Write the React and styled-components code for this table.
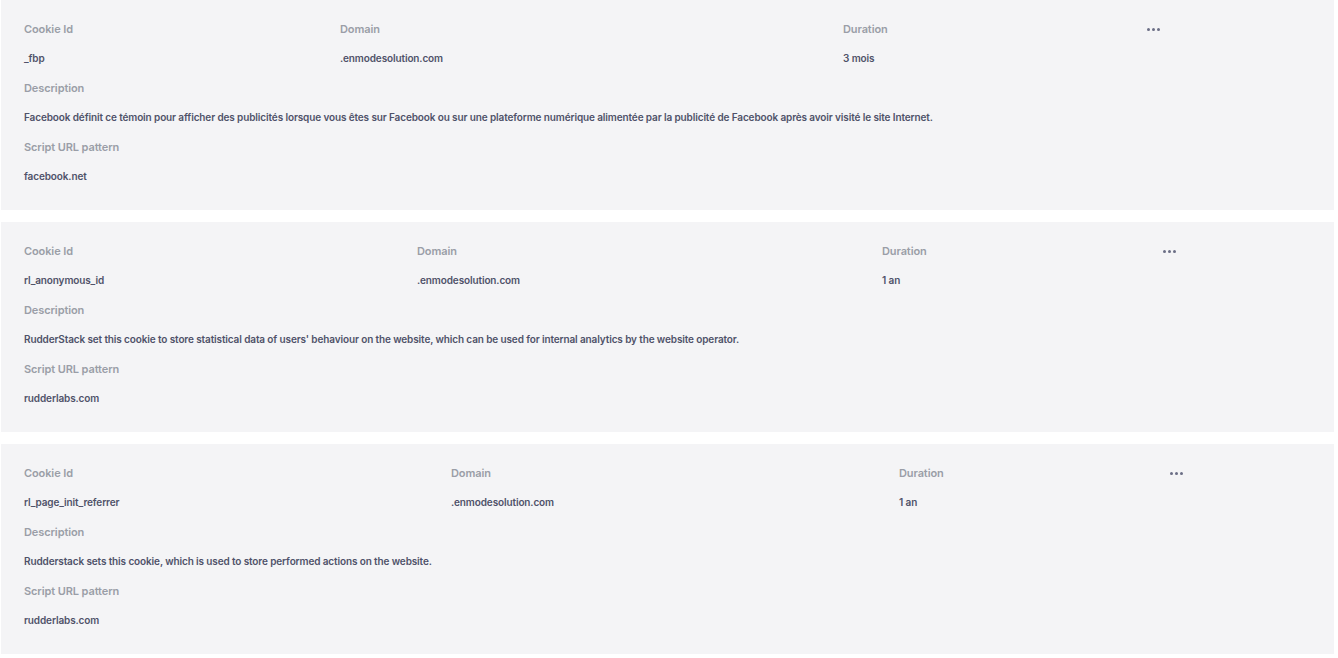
import React from 'react';
import styled, { createGlobalStyle } from 'styled-components';

const GlobalStyle = createGlobalStyle`
	body {
		margin: 0;
		background: #ffffff;
		font-family: Inter, 'Noto Sans', sans-serif;
	}
`;

const cookies = [
	{
		id: '_fbp',
		domain: '.enmodesolution.com',
		duration: '3 mois',
		description:
			'Facebook définit ce témoin pour afficher des publicités lorsque vous êtes sur Facebook ou sur une plateforme numérique alimentée par la publicité de Facebook après avoir visité le site Internet.',
		pattern: 'facebook.net',
		columns: '316px 503px 304px 1fr',
	},
	{
		id: 'rl_anonymous_id',
		domain: '.enmodesolution.com',
		duration: '1 an',
		description:
			"RudderStack set this cookie to store statistical data of users' behaviour on the website, which can be used for internal analytics by the website operator.",
		pattern: 'rudderlabs.com',
		columns: '393px 465px 281px 1fr',
	},
	{
		id: 'rl_page_init_referrer',
		domain: '.enmodesolution.com',
		duration: '1 an',
		description: 'Rudderstack sets this cookie, which is used to store performed actions on the website.',
		pattern: 'rudderlabs.com',
		columns: '427px 448px 271px 1fr',
	},
];

const App = () => {
	return (
		<>
			<GlobalStyle />
			<List>
				{cookies.map((cookie) => (
					<Card key={cookie.id}>
						<TopGrid $columns={cookie.columns}>
							<Field>
								<Label>Cookie Id</Label>
								<Value>{cookie.id}</Value>
							</Field>
							<Field>
								<Label>Domain</Label>
								<Value>{cookie.domain}</Value>
							</Field>
							<Field>
								<Label>Duration</Label>
								<Value>{cookie.duration}</Value>
							</Field>
							<MoreButton aria-label="More">
								<Dot />
								<Dot />
								<Dot />
							</MoreButton>
						</TopGrid>
						<Field>
							<Label>Description</Label>
							<Value>{cookie.description}</Value>
						</Field>
						<Field>
							<Label>Script URL pattern</Label>
							<Value>{cookie.pattern}</Value>
						</Field>
					</Card>
				))}
			</List>
		</>
	);
};

export default App;

const List = styled.div`
	display: flex;
	flex-direction: column;
	gap: 12px;
	margin: 0 4px 0 1px;
`;

const Card = styled.div`
	background: #f4f4f6;
	height: 210px;
	box-sizing: border-box;
	padding: 22px 23px 0 23px;
	display: flex;
	flex-direction: column;
	gap: 16px;
`;

const TopGrid = styled.div`
	display: grid;
	grid-template-columns: ${(p) => p.$columns};
	align-items: start;
`;

const Field = styled.div`
	display: flex;
	flex-direction: column;
	gap: 15px;
`;

const Label = styled.div`
	font-size: 11px;
	line-height: 14px;
	font-weight: 600;
	letter-spacing: -0.1px;
	color: #9a9ea7;
`;

const Value = styled.div`
	font-size: 10px;
	line-height: 14px;
	font-weight: 600;
	letter-spacing: -0.12px;
	color: #4f5269;
`;

const MoreButton = styled.button`
	display: flex;
	align-items: center;
	gap: 2px;
	height: 14px;
	padding: 0;
	border: none;
	background: none;
	cursor: pointer;
`;

const Dot = styled.span`
	width: 3px;
	height: 3px;
	border-radius: 50%;
	background: #6b6e86;
`;
